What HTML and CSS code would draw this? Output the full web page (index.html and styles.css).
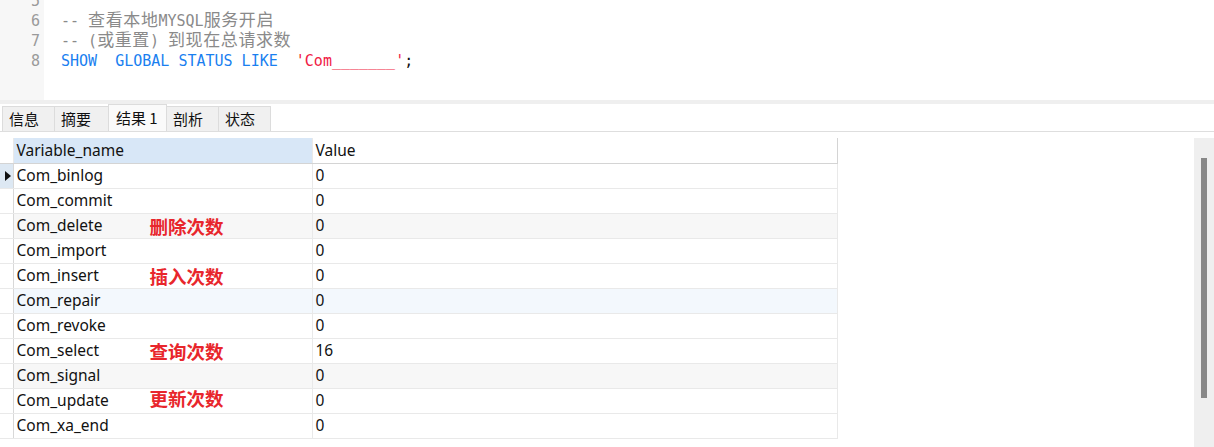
FILE: index.html
```html
<!DOCTYPE html>
<html>
<head>
<meta charset="utf-8">
<link rel="stylesheet" href="styles.css">
</head>
<body>
<div class="editor">
  <div class="gutter">
    <div class="ln">5</div>
    <div class="ln">6</div>
    <div class="ln">7</div>
    <div class="ln">8</div>
  </div>
  <div class="code">
    <div class="line"></div>
    <div class="line cmt">-- <span class="cj">查看本地</span>MYSQL<span class="cj">服务开启</span></div>
    <div class="line cmt">-- (<span class="cj">或重置</span>) <span class="cj">到现在总请求数</span></div>
    <div class="line"><span class="kw">SHOW  GLOBAL STATUS LIKE</span>  <span class="str">'Com_______'</span>;</div>
  </div>
</div>
<div class="splitter"></div>
<div class="tabs">
  <div class="tab">信息</div>
  <div class="tab">摘要</div>
  <div class="tab active">结果 1</div>
  <div class="tab">剖析</div>
  <div class="tab">状态</div>
</div>
<div class="results">
  <table class="grid">
    <thead>
      <tr><th class="ind"></th><th class="c1 sel">Variable_name</th><th class="c2">Value</th></tr>
    </thead>
    <tbody>
      <tr><td class="ind cur"><span class="tri"></span></td><td>Com_binlog</td><td>0</td></tr>
      <tr><td class="ind"></td><td>Com_commit</td><td>0</td></tr>
      <tr class="gray"><td class="ind"></td><td class="note-cell">Com_delete<span class="note">删除次数</span></td><td>0</td></tr>
      <tr><td class="ind"></td><td>Com_import</td><td>0</td></tr>
      <tr><td class="ind"></td><td class="note-cell">Com_insert<span class="note">插入次数</span></td><td>0</td></tr>
      <tr class="blue"><td class="ind"></td><td>Com_repair</td><td>0</td></tr>
      <tr><td class="ind"></td><td>Com_revoke</td><td>0</td></tr>
      <tr><td class="ind"></td><td class="note-cell">Com_select<span class="note">查询次数</span></td><td>16</td></tr>
      <tr class="gray"><td class="ind"></td><td>Com_signal</td><td>0</td></tr>
      <tr><td class="ind"></td><td class="note-cell">Com_update<span class="note up">更新次数</span></td><td>0</td></tr>
      <tr><td class="ind"></td><td>Com_xa_end</td><td>0</td></tr>
    </tbody>
  </table>
  <div class="spacer"></div>
  <div class="scrollbar"><div class="thumb"></div></div>
</div>
</body>
</html>
```
FILE: styles.css
```css
* { box-sizing: border-box; }
html, body { margin: 0; padding: 0; background: #fff; }
body {
  width: 1214px;
  height: 447px;
  overflow: hidden;
  font-family: "Noto Sans", "Noto Sans CJK SC", sans-serif;
  color: #111;
}
.editor {
  display: flex;
  height: 100px;
  overflow: hidden;
  font-family: "DejaVu Sans Mono", "Noto Sans CJK SC", monospace;
  font-size: 15px;
}
.gutter {
  width: 44px;
  background: #f7f7f7;
  padding-right: 4px;
  margin-top: -9px;
}
.gutter .ln {
  height: 20px;
  line-height: 20px;
  text-align: right;
  color: #9a9a9a;
}
.code {
  padding-left: 17px;
  margin-top: -9px;
}
.line {
  height: 20px;
  line-height: 20px;
  white-space: pre;
}
.cj { font-size: 17px; letter-spacing: 0.6px; line-height: 18px; }
.cmt { color: #8a8a8a; }
.kw { color: #1a7ff0; }
.str { color: #f01a44; }
.splitter {
  height: 4px;
  background: #efefef;
}
.tabs {
  display: flex;
  align-items: flex-end;
  height: 28px;
  padding-left: 2px;
  border-bottom: 1px solid #dedede;
  font-family: "Noto Sans CJK SC", sans-serif;
  font-size: 15px;
}
.tab {
  height: 25px;
  line-height: 24px;
  padding: 0 6px;
  background: #f0f0f0;
  border: 1px solid #dcdcdc;
  border-bottom: none;
  margin-right: -1px;
  color: #111;
}
.tab:nth-child(1) { width: 53px; }
.tab:nth-child(2) { width: 55px; }
.tab:nth-child(4) { width: 53px; }
.tab:nth-child(5) { width: 53px; }
.tab.active {
  width: 59px;
  height: 27px;
  line-height: 26px;
  background: #fafafa;
  padding-left: 7px;
}
.results {
  display: flex;
  padding-top: 6px;
  height: 315px;
}
.grid {
  border-collapse: collapse;
  font-size: 15.5px;
  align-self: flex-start;
  table-layout: fixed;
  width: 837px;
}
.grid th, .grid td {
  height: 25px;
  padding: 0 0 0 3px;
  text-align: left;
  font-weight: normal;
  border: 1px solid #e9e9e9;
  white-space: nowrap;
  line-height: 23px;
}
.grid thead th { border-bottom: 1px solid #d4d4d4; }
.grid .ind { width: 13px; padding: 0; border-left: none; border-right: 1px solid #d8d8d8; }
.grid thead .ind { border-top: none; border-right: 1px solid #e9e9e9; }
.grid .c1 { width: 299px; }
.grid .c2 { width: 525px; }
.grid thead th.c2 { border-right: 1px solid #d4d4d4; border-top: none; }
.grid thead th.sel { background: #d8e7f7; border-top: none; }
.grid td.cur { background: #dde8f3; }
.tri {
  display: block;
  width: 0; height: 0;
  margin-left: 5px;
  border-top: 5px solid transparent;
  border-bottom: 5px solid transparent;
  border-left: 6px solid #111;
}
.grid tr.gray td { background: #f7f7f7; }
.grid tr.blue td { background: #f3f8fd; }
.grid tr.gray td.ind, .grid tr.blue td.ind { background: #fff; }
.note-cell { position: relative; }
.note {
  position: absolute;
  left: 136px;
  top: 0;
  font-family: "Noto Sans CJK SC", sans-serif;
  font-weight: bold;
  font-size: 18.5px;
  color: #e8262c;
  line-height: 24px;
}
.note.up { top: -3px; }
.spacer { flex: 1; }
.scrollbar {
  width: 20px;
  height: 310px;
  background: #efefef;
  padding: 20px 0 0 7px;
}
.thumb {
  width: 6px;
  height: 240px;
  background: #888;
}
```
